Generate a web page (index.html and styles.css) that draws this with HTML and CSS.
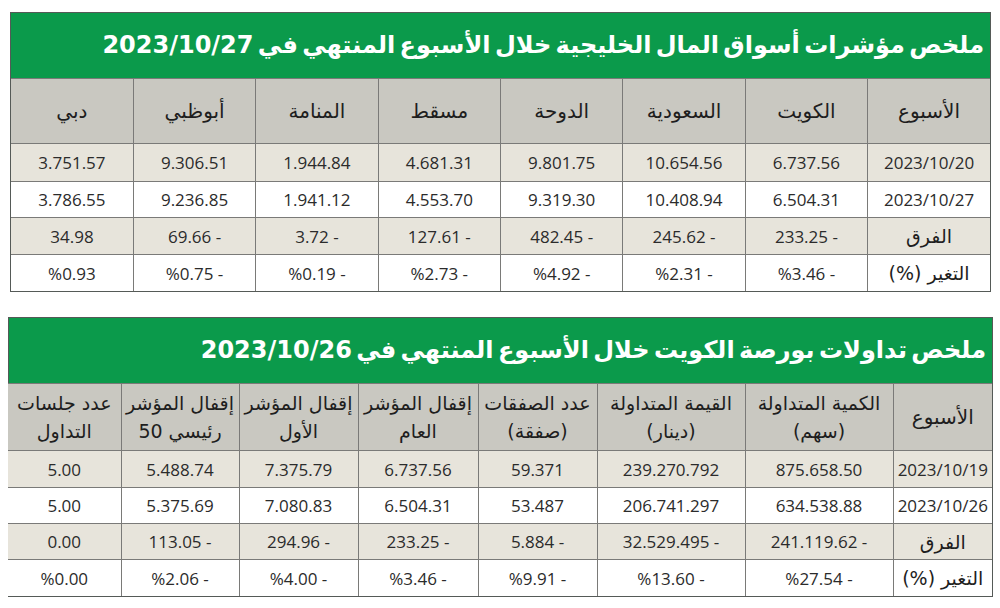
FILE: index.html
```html
<!DOCTYPE html>
<html lang="ar" dir="rtl">
<head>
<meta charset="utf-8">
<title>ملخص الأسواق</title>
<link rel="stylesheet" href="styles.css">
</head>
<body>
<section class="panel panel-gulf">
  <h1 class="panel-title">ملخص مؤشرات أسواق المال الخليجية خلال الأسبوع المنتهي في 2023/10/27</h1>
  <table class="grid grid-gulf">
    <colgroup>
      <col class="c8"><col class="c8"><col class="c8"><col class="c8"><col class="c8"><col class="c8"><col class="c8"><col class="c8">
    </colgroup>
    <thead>
      <tr class="head">
        <th>الأسبوع</th><th>الكويت</th><th>السعودية</th><th>الدوحة</th><th>مسقط</th><th>المنامة</th><th>أبوظبي</th><th>دبي</th>
      </tr>
    </thead>
    <tbody>
      <tr class="odd r1"><td>2023/10/20</td><td>6.737.56</td><td>10.654.56</td><td>9.801.75</td><td>4.681.31</td><td>1.944.84</td><td>9.306.51</td><td>3.751.57</td></tr>
      <tr class="even r2"><td>2023/10/27</td><td>6.504.31</td><td>10.408.94</td><td>9.319.30</td><td>4.553.70</td><td>1.941.12</td><td>9.236.85</td><td>3.786.55</td></tr>
      <tr class="odd r3"><td class="lbl">الفرق</td><td>- 233.25</td><td>- 245.62</td><td>- 482.45</td><td>- 127.61</td><td>- 3.72</td><td>- 69.66</td><td>34.98</td></tr>
      <tr class="even r4"><td class="lbl">التغير (%)</td><td>- %3.46</td><td>- %2.31</td><td>- %4.92</td><td>- %2.73</td><td>- %0.19</td><td>- %0.75</td><td>%0.93</td></tr>
    </tbody>
  </table>
</section>

<section class="panel panel-kw">
  <h1 class="panel-title">ملخص تداولات بورصة الكويت خلال الأسبوع المنتهي في 2023/10/26</h1>
  <table class="grid grid-kw">
    <colgroup>
      <col class="k1"><col class="k2"><col class="k3"><col class="k4"><col class="k5"><col class="k6"><col class="k7"><col class="k8">
    </colgroup>
    <thead>
      <tr class="head">
        <th>الأسبوع</th>
        <th>الكمية المتداولة<br>(سهم)</th>
        <th>القيمة المتداولة<br>(دينار)</th>
        <th>عدد الصفقات<br>(صفقة)</th>
        <th>إقفال المؤشر<br>العام</th>
        <th>إقفال المؤشر<br>الأول</th>
        <th>إقفال المؤشر<br>رئيسي 50</th>
        <th>عدد جلسات<br>التداول</th>
      </tr>
    </thead>
    <tbody>
      <tr class="odd r1"><td>2023/10/19</td><td>875.658.50</td><td>239.270.792</td><td>59.371</td><td>6.737.56</td><td>7.375.79</td><td>5.488.74</td><td>5.00</td></tr>
      <tr class="even r2"><td>2023/10/26</td><td>634.538.88</td><td>206.741.297</td><td>53.487</td><td>6.504.31</td><td>7.080.83</td><td>5.375.69</td><td>5.00</td></tr>
      <tr class="odd r3"><td class="lbl">الفرق</td><td>- 241.119.62</td><td>- 32.529.495</td><td>- 5.884</td><td>- 233.25</td><td>- 294.96</td><td>- 113.05</td><td>0.00</td></tr>
      <tr class="even r4"><td class="lbl">التغير (%)</td><td>- %27.54</td><td>- %13.60</td><td>- %9.91</td><td>- %3.46</td><td>- %4.00</td><td>- %2.06</td><td>%0.00</td></tr>
    </tbody>
  </table>
</section>
</body>
</html>
```

FILE: styles.css
```css
html, body {
  margin: 0;
  padding: 0;
  background: #ffffff;
}

body {
  width: 1000px;
  height: 608px;
  overflow: hidden;
  font-family: "Open Sans", "DejaVu Sans", sans-serif;
  color: #2b2b2b;
}

.panel {
  border: 1px solid #555a57;
  box-sizing: border-box;
}

.panel-gulf {
  width: 981px;
  margin-top: 12px;
  margin-right: 9px;
  margin-left: 10px;
}

.panel-kw {
  width: 985px;
  margin-top: 25px;
  margin-right: 7px;
  margin-left: 8px;
}

.panel-title {
  margin: 0;
  height: 65px;
  background: #0b9a4b;
  color: #ffffff;
  font-family: "DejaVu Sans", sans-serif;
  font-weight: bold;
  font-size: 24px;
  word-spacing: -4px;
  line-height: 65px;
  padding: 0 6px 0 0;
  text-align: right;
  white-space: nowrap;
  overflow: hidden;
}

.grid {
  width: 100%;
  border-collapse: collapse;
  table-layout: fixed;
}

.grid th, .grid td {
  border: 1px solid #7a7a78;
  text-align: center;
  padding: 0;
  white-space: nowrap;
}

.grid tr > :first-child { border-right: none; }
.grid tr > :last-child { border-left: none; }
.grid tbody tr:last-child td { border-bottom: none; }

.grid th {
  background: #c9c8c1;
  font-family: "DejaVu Sans", sans-serif;
  font-weight: normal;
  font-size: 20px;
  color: #1e1e1e;
}

.grid td {
  font-size: 17px;
  color: #2b2b2b;
}

.grid td.lbl {
  font-family: "DejaVu Sans", sans-serif;
  font-size: 19px;
  color: #1e1e1e;
}

.odd td { background: #e7e4db; }
.even td { background: #ffffff; }

.grid-gulf .head th { height: 64px; }
.grid-gulf .r1 td { height: 37px; }
.grid-gulf .r2 td { height: 35px; }
.grid-gulf .r3 td { height: 36px; }
.grid-gulf .r4 td { height: 36px; }

.grid-kw .head th {
  height: 66px;
  font-size: 19px;
  line-height: 28px;
}
.grid-kw .head th:first-child { font-size: 20px; }
.grid-kw .r1 td { height: 36px; }
.grid-kw .r2 td { height: 35px; }
.grid-kw .r3 td { height: 35px; }
.grid-kw .r4 td { height: 36px; }

.c8 { width: 12.5%; }

.k1 { width: 99px; }
.k2 { width: 148px; }
.k3 { width: 148px; }
.k4 { width: 119px; }
.k5 { width: 120px; }
.k6 { width: 119px; }
.k7 { width: 118px; }
.k8 { width: 113px; }
```
